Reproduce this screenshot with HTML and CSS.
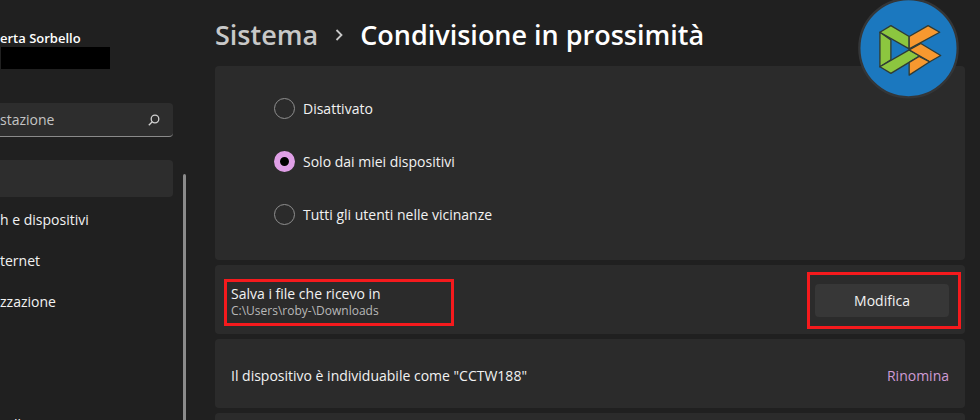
FILE: index.html
```html
<!DOCTYPE html>
<html lang="it">
<head>
    <meta charset="UTF-8">
    <meta name="viewport" content="width=device-width, initial-scale=1.0">
    <title>Condivisione in prossimità</title>
    <link rel="stylesheet" href="styles.css">
</head>
<body>
    <aside class="sidebar">
        <div class="profile">
            <div class="profile-name">erta Sorbello</div>
            <div class="profile-mail"></div>
        </div>

        <div class="search">
            <input type="text" class="search-input" placeholder="stazione" aria-label="Cerca impostazione">
            <svg class="search-icon" viewBox="0 0 12 12" aria-hidden="true">
                <circle cx="7" cy="5" r="3.8"/>
                <path d="M4.3 7.7 L0.8 11.2"/>
            </svg>
        </div>

        <div class="menu">
            <nav class="nav">
                <a href="#" class="nav-item active" aria-label="Sistema"></a>
                <a href="#" class="nav-item">h e dispositivi</a>
                <a href="#" class="nav-item">ternet</a>
                <a href="#" class="nav-item">zzazione</a>
                <a href="#" class="nav-item" aria-label="App"></a>
                <a href="#" class="nav-item" aria-label="Account"></a>
                <a href="#" class="nav-item indent">ll</a>
            </nav>
            <div class="scrollbar"></div>
        </div>
    </aside>

    <main class="content">
        <h1 class="title">
            <a href="#" class="title-parent">Sistema</a>
            <svg class="chevron" viewBox="0 0 8 12" aria-hidden="true">
                <path d="M1.5 1 L6.5 6 L1.5 11"/>
            </svg>
            <span>Condivisione in prossimità</span>
        </h1>

        <div class="cards">
            <div class="card options">
                <label class="option"><input type="radio" name="sharing"> Disattivato</label>
                <label class="option"><input type="radio" name="sharing" checked> Solo dai miei dispositivi</label>
                <label class="option"><input type="radio" name="sharing"> Tutti gli utenti nelle vicinanze</label>
            </div>

            <div class="card save">
                <div class="mark save-text">
                    <div>Salva i file che ricevo in</div>
                    <div class="path">C:\Users\roby-\Downloads</div>
                </div>
                <div class="mark save-action">
                    <button class="button">Modifica</button>
                </div>
            </div>

            <div class="card row">
                <div>Il dispositivo è individuabile come "CCTW188"</div>
                <a href="#" class="link">Rinomina</a>
            </div>

            <div class="card row"></div>
        </div>
    </main>

    <svg class="logo" viewBox="24 -6 304 304" role="img" aria-label="Logo">
        <circle cx="176" cy="145" r="148" fill="#1b78bf" stroke="#343638" stroke-width="7"/>
        <g stroke="#2f3b35" stroke-width="4" stroke-linejoin="round">
            <g fill="#8cc63f">
                <path d="M90 97 L123 120 V180 L90 201 Z"/>
                <path d="M90 97 L123 77 L178 110 V147 Z"/>
                <path d="M90 201 L178 150 L210 168 L123 221 Z"/>
            </g>
            <g fill="#f7982f">
                <path d="M178 110 L235 77 L270 97 L178 147 Z"/>
                <path d="M178 150 L213 131 L273 167 L240 186 Z"/>
                <path d="M178 188 L208 170 L240 186 L178 226 Z"/>
            </g>
        </g>
    </svg>
</body>
</html>
```

FILE: styles.css
```css
* {
    box-sizing: border-box;
}

body {
    margin: 0;
    height: 100vh;
    display: flex;
    overflow: hidden;
    background-color: #202020;
    color: #f2f2f2;
    font-family: "Open Sans", "Noto Sans", sans-serif;
    font-size: 14px;
    line-height: 20px;
}

a {
    color: inherit;
    text-decoration: none;
}

/* sidebar */
.sidebar {
    flex: 0 0 186px;
    min-width: 0;
    display: flex;
    flex-direction: column;
    padding-top: 30px;
}

.profile-name {
    font-size: 13px;
    line-height: 17px;
    font-weight: 600;
    color: #fff;
}

.profile-mail {
    width: 109px;
    height: 22px;
    margin-left: 1px;
    background-color: #000;
}

.search {
    display: flex;
    align-items: center;
    height: 34px;
    margin: 34px 13px 0 0;
    padding-right: 13px;
    background-color: #2d2d2d;
    border-bottom: 1px solid #8a8a8a;
    border-radius: 0 4px 4px 0;
}

.search-input {
    flex: 1;
    min-width: 0;
    padding: 0;
    border: 0;
    outline: 0;
    background: none;
    color: #fff;
    font: inherit;
}

.search-input::placeholder {
    color: #c4c4c4;
    opacity: 1;
}

.search-icon {
    width: 12px;
    height: 12px;
    fill: none;
    stroke: #d0d0d0;
    stroke-width: 1.3;
}

.menu {
    flex: 1;
    display: flex;
    gap: 10px;
    min-height: 0;
    margin-top: 23px;
}

.nav {
    flex: 1;
    display: flex;
    flex-direction: column;
    gap: 4px;
    overflow: hidden;
}

.nav-item {
    flex: none;
    display: flex;
    align-items: center;
    height: 37px;
    border-radius: 0 4px 4px 0;
}

.nav-item.active {
    background-color: #2d2d2d;
}

.nav-item.indent {
    padding-left: 14px;
}

.scrollbar {
    width: 3px;
    margin-top: 14px;
    background-color: #8b8b8b;
    border-radius: 2px 2px 0 0;
}

/* content */
.content {
    flex: 1;
    min-width: 0;
    padding: 16px 15px 0 29px;
    overflow: hidden;
}

.title {
    display: flex;
    align-items: center;
    margin: 0;
    font-size: 27px;
    line-height: 38px;
    font-weight: 600;
    color: #fff;
}

.title-parent {
    color: #c8c8c8;
}

.chevron {
    width: 8px;
    height: 12px;
    margin: 0 17px;
    fill: none;
    stroke: #c8c8c8;
    stroke-width: 1.8;
}

.cards {
    display: flex;
    flex-direction: column;
    gap: 5px;
    margin-top: 12px;
}

.card {
    background-color: #2b2b2b;
    border-radius: 4px;
}

.options {
    display: flex;
    flex-direction: column;
    gap: 32px;
    padding: 32px 59px 35px;
}

.option {
    display: flex;
    align-items: center;
    gap: 8px;
    height: 21px;
}

.option input {
    appearance: none;
    width: 21px;
    height: 21px;
    margin: 0;
    border: 1px solid #8f8f8f;
    border-radius: 50%;
}

.option input:checked {
    border: 6px solid #df9fe6;
    background-color: #000;
}

.save {
    display: flex;
    justify-content: space-between;
    padding: 7px 4px 5px 9px;
}

.mark {
    border: 3px solid #f51a1d;
}

.save-text {
    flex: 0 0 230px;
    align-self: flex-end;
    margin-bottom: 3px;
    padding: 3px 4px 4px;
    line-height: 18px;
}

.path {
    font-size: 12px;
    line-height: 16px;
    color: #b8b8b8;
}

.save-action {
    padding: 9px 9px 9px 5px;
}

.button {
    width: 134px;
    height: 33px;
    padding: 0;
    border: 0;
    border-radius: 4px;
    background-color: #373737;
    color: #f2f2f2;
    font: inherit;
}

.row {
    display: flex;
    align-items: center;
    justify-content: space-between;
    height: 69px;
    padding: 4px 16px 0;
}

.link {
    color: #cf9bd6;
}

.logo {
    position: absolute;
    top: -2px;
    right: 21px;
    width: 101px;
    height: 101px;
}
```
